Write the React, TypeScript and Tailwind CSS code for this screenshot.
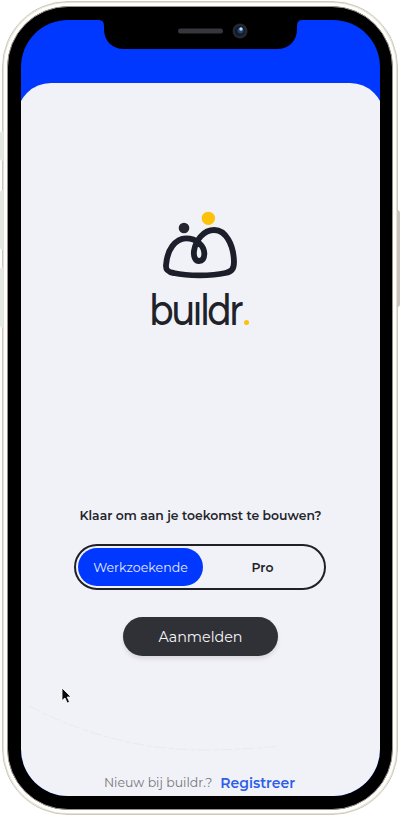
import React from "react";

const font = "font-['Montserrat','Inter',sans-serif]";

function Notch() {
  return (
    <svg className="absolute left-[78px] top-[-1px] h-[31px] w-[203px]" viewBox="0 0 203 31" aria-hidden="true">
      <path d="M0 0H203V1Q198 1 198 7V10C198 22 190 30 178 30H25C13 30 5 22 5 10V7Q5 1 0 1Z" fill="#000" />
      <rect x="79" y="9.5" width="45" height="5" rx="2.5" fill="#37363c" />
      <circle cx="141" cy="12" r="7.5" fill="#26272c" />
      <circle cx="141" cy="12" r="5" fill="#101b2d" />
      <circle cx="141.5" cy="11.5" r="3" fill="#224477" />
      <circle cx="142" cy="10" r="1.7" fill="#b9ddf6" />
    </svg>
  );
}

function Logo() {
  return (
    <div className="flex flex-col items-center">
      <svg className="mr-[2px] h-[70px] w-[80px]" viewBox="60 30 240 210" aria-hidden="true">
        <path
          d="M78 196C81 150 106 115 138 115C171 115 192 138 193 160C193 175 187 183 177 183C166 183 160 170 162 153C167 120 191 90 223 90C257 90 281 134 282 186C282 207 275 215 256 219C211 229 143 228 101 219C83 216 77 210 78 196Z"
          fill="none"
          stroke="#1c1e29"
          strokeWidth="17.5"
        />
        <circle cx="132" cy="84" r="16" fill="#25262f" />
        <circle cx="205" cy="55" r="20" fill="#fcc10b" />
      </svg>
      <div className="mt-[6px] flex h-[48px] w-[102px] items-baseline whitespace-nowrap text-[42px] leading-[48px] text-[#20222a]" aria-label="buildr.">
        <span className="-ml-px w-[95px] origin-left scale-x-[0.86] font-medium tracking-[-3.2px]">buıldr</span>
        <span className="size-[5px] shrink-0 rounded-full bg-[#fcc10b]" />
      </div>
    </div>
  );
}

export default function App() {
  return (
    <main className={`relative h-[818px] w-[400px] overflow-hidden bg-white ${font}`}>
      <div className="absolute left-0 top-[131px] h-[30px] w-[3px] rounded-l bg-[#e3e8e3]" />
      <div className="absolute left-0 top-[190px] h-[60px] w-[3px] rounded-l bg-[#e3e8e3]" />
      <div className="absolute left-0 top-[267px] h-[61px] w-[3px] rounded-l bg-[#e3ebe3]" />
      <div className="absolute left-[397px] top-[210px] h-[97px] w-[3px] rounded-r bg-[#c9c3bd]" />
      <div className="ml-[2px] h-[816px] w-[396px] pt-px">
        <div className="h-[814px] rounded-[66px] border border-[#cbc8bc] bg-[#fffefa] p-1 shadow-[inset_0_0_0_1px_#e6e2d8]">
          <div className="h-[804px] rounded-[61px] border border-[#96938e] bg-black px-[13px] pt-[13px]">
            <div className="relative flex h-[776px] w-[359px] flex-col overflow-hidden rounded-[47px] bg-[#0038ff]">
              <Notch />
              <section className="mt-[63.4px] -mx-1 flex h-[713px] flex-col items-center rounded-t-[34px] bg-[#f1f2f8] pt-[126.6px]">
                <Logo />
                <h1 className="mt-[172px] whitespace-nowrap text-[12.4px] font-semibold leading-5 text-[#25252b]">
                  Klaar om aan je toekomst te bouwen?
                </h1>
                <div className="mr-px mt-[18px] flex h-[46px] w-[252px] rounded-full border-2 border-[#202127] p-[2px]">
                  <button className="h-[38px] w-[125px] rounded-full bg-[#0038ff] pt-[2px] text-[12.6px] text-[#e7edff]">Werkzoekende</button>
                  <button className="flex-1 pt-[2px] text-[12.4px] font-semibold text-[#202127]">Pro</button>
                </div>
                <button className="mt-[27px] h-[39px] w-[155px] rounded-full bg-[#303136] pt-[2px] text-[14.3px] text-[#f6f6f8] shadow-[0_3px_4px_#dcd7df]">
                  Aanmelden
                </button>
                <footer className="mr-[2px] mt-[117px] flex items-center gap-2 whitespace-nowrap leading-5">
                  <span className="text-[12.5px] text-[#77777c]">Nieuw bij buildr.?</span>
                  <a className="text-[14px] font-semibold text-[#2d5ee8]">Registreer</a>
                </footer>
              </section>
              <svg className="absolute left-0 top-[680px] h-[56px] w-[359px]" viewBox="0 0 359 56" aria-hidden="true">
                <path d="M8 6Q91 49 178 50Q220 50 258 46" fill="none" stroke="#e8e4e5" strokeWidth=".7" strokeDasharray="12 3 5 2" />
              </svg>
            </div>
          </div>
        </div>
      </div>
      <svg className="absolute left-[60px] top-[686px] h-[19px] w-[13px]" viewBox="0 0 13 19" aria-hidden="true">
        <path d="M2 2V14.5L5 12L7.2 17L9.5 16L7.2 11H11Z" fill="#08080a" stroke="#fff" strokeWidth=".8" />
      </svg>
    </main>
  );
}
